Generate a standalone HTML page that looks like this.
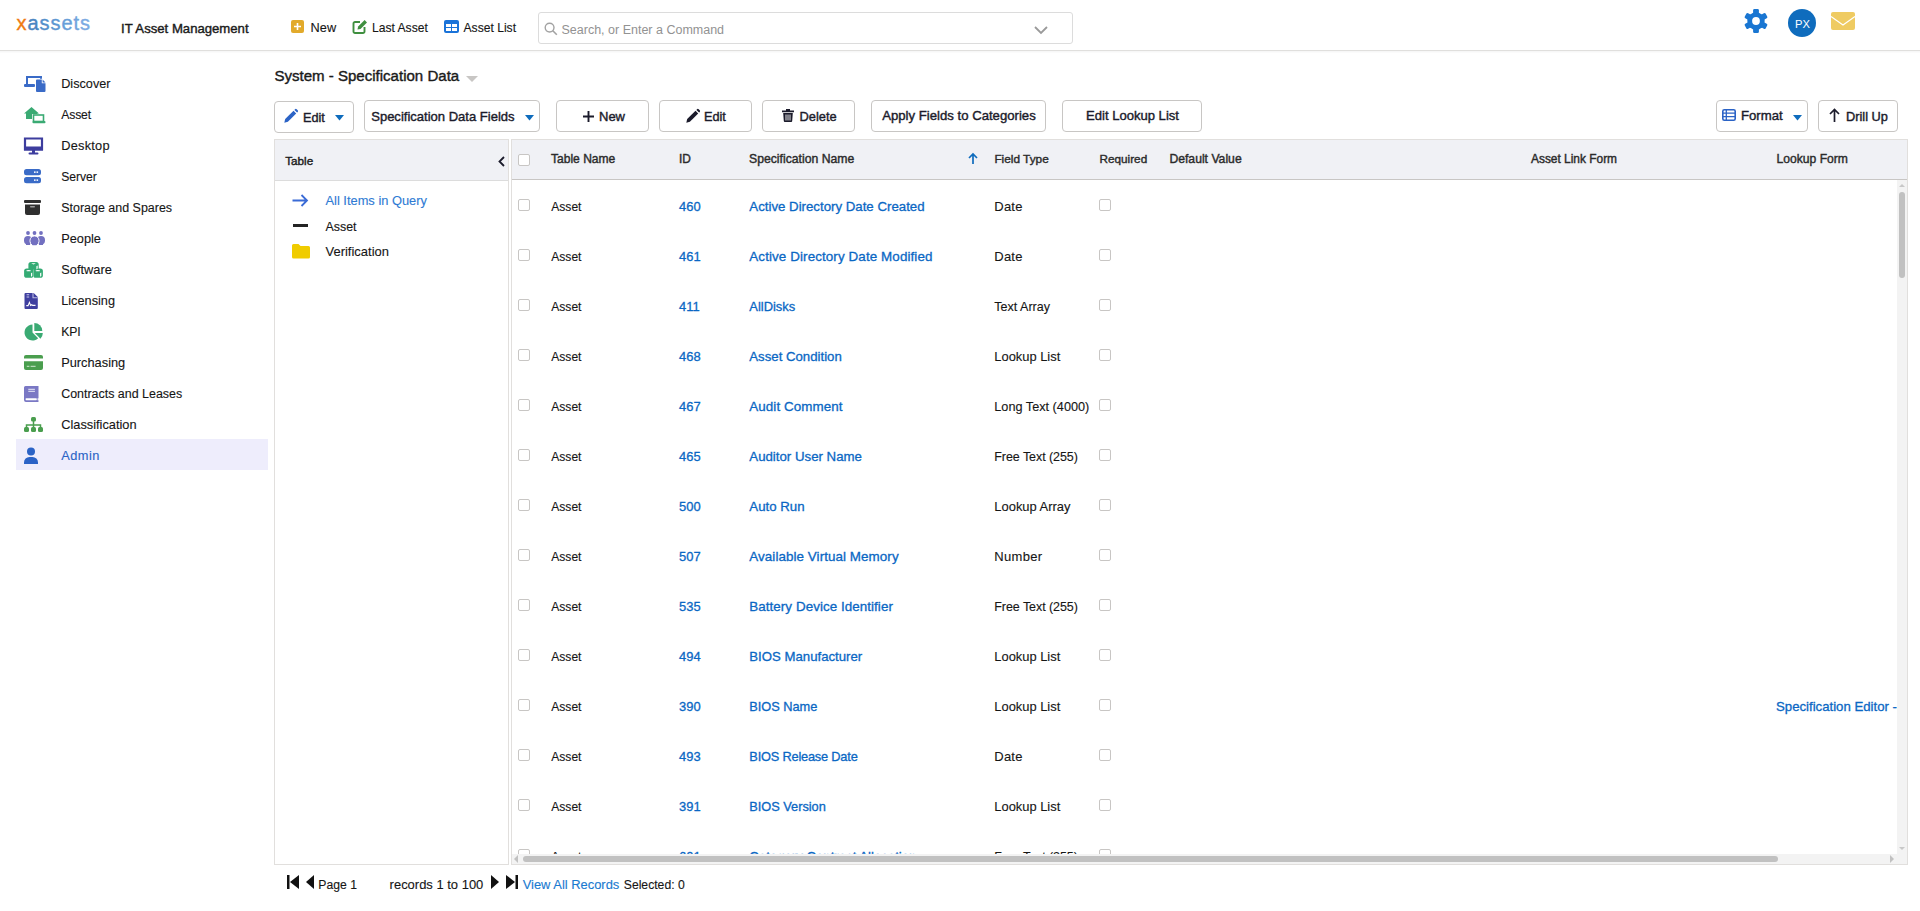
<!DOCTYPE html><html><head><meta charset="utf-8"><title>xassets</title><style>
*{box-sizing:border-box;margin:0;padding:0}
html,body{width:1920px;height:911px;overflow:hidden;background:#fff;font-family:"Liberation Sans",sans-serif;color:#242424}
.t{position:absolute;white-space:nowrap;line-height:20px;height:20px;-webkit-text-stroke:0.12px currentColor}
.abs{position:absolute}
.t.sb2{-webkit-text-stroke:0.3px currentColor}
.t.sb{-webkit-text-stroke:0.4px currentColor}
.btn{position:absolute;border:1px solid #c8c6c4;border-radius:4px;background:#fff}
svg{position:absolute;overflow:visible}
</style></head><body>
<div class="abs" style="left:0;top:0;width:1920px;height:51px;background:#fff;border-bottom:1px solid #e0dfdd"></div>
<div class="abs" style="left:0;top:51px;width:1920px;height:1px;background:#f7f7f7"></div>
<div class="abs" style="left:0;top:52px;width:1920px;height:1px;background:#fbfbfb"></div>
<div class="t" style="left:16.5px;top:13.27px;font-size:20px;letter-spacing:0.95px;-webkit-text-stroke:0"><span style="color:#f07a12;-webkit-text-stroke:0.4px #f07a12">x</span><span style="color:#4a86c2;-webkit-text-stroke:0.4px #4a86c2">a</span><span style="color:#5490cb;-webkit-text-stroke:0.4px #5490cb">s</span><span style="color:#5d97d2;-webkit-text-stroke:0.4px #5d97d2">s</span><span style="color:#689fd9;-webkit-text-stroke:0.4px #689fd9">e</span><span style="color:#72a4dd;-webkit-text-stroke:0.4px #72a4dd">t</span><span style="color:#7caae2;-webkit-text-stroke:0.4px #7caae2">s</span></div>
<div class="t sb" style="left:121px;top:18.94px;font-size:13.15px;color:#1b1b1b;">IT Asset Management</div>
<svg style="left:291px;top:20px" width="13" height="13" viewBox="0 0 13 13"><rect x="0" y="0" width="13" height="13" rx="2" fill="#e2aa2b"/><path d="M6.5 3v7M3 6.5h7" stroke="#fff" stroke-width="1.6"/></svg>
<div class="t " style="left:310.6px;top:17.98px;font-size:12.75px;color:#161616;">New</div>
<svg style="left:352px;top:19px" width="16" height="15" viewBox="0 0 16 15"><path d="M8 3H3a1.5 1.5 0 0 0-1.5 1.5v8A1.5 1.5 0 0 0 3 14h8a1.5 1.5 0 0 0 1.5-1.5V8" fill="none" stroke="#3f8f3f" stroke-width="1.9"/><path d="M5.5 10.5l0.6-3 6.5-6.5 2.4 2.4-6.5 6.5z" fill="#3f8f3f"/></svg>
<div class="t " style="left:371.9px;top:18.19px;font-size:12.14px;color:#161616;">Last Asset</div>
<svg style="left:444px;top:20px" width="15" height="13" viewBox="0 0 15 13"><rect x="0" y="0" width="15" height="13" rx="2" fill="#1a73d9"/><rect x="2" y="4" width="5" height="3" fill="#fff"/><rect x="8" y="4" width="5" height="3" fill="#fff"/><rect x="2" y="8" width="5" height="3" fill="#fff"/><rect x="8" y="8" width="5" height="3" fill="#fff"/></svg>
<div class="t " style="left:463.5px;top:18.20px;font-size:12.11px;color:#161616;">Asset List</div>
<div class="abs" style="left:538px;top:12px;width:535px;height:32px;border:1px solid #dcdcdc;border-radius:3px"></div>
<svg style="left:544px;top:22px" width="14" height="14" viewBox="0 0 14 14"><circle cx="5.6" cy="5.6" r="4.4" fill="none" stroke="#a2a2a2" stroke-width="1.4"/><path d="M8.8 8.8l4 4" stroke="#a2a2a2" stroke-width="1.6"/></svg>
<div class="t " style="left:561.5px;top:19.57px;font-size:12.5px;color:#929292;-webkit-text-stroke:0">Search, or Enter a Command</div>
<svg style="left:1034px;top:26px" width="14" height="8" viewBox="0 0 14 8"><path d="M1 1l6 6 6-6" fill="none" stroke="#9a9a9a" stroke-width="1.8"/></svg>
<svg style="left:1744.2px;top:8.8px" width="24" height="24" viewBox="-12 -12 24 24"><g fill="#1976d2"><circle r="8.7"/><rect x="-2.9" y="-12" width="5.8" height="24" rx="1.3"/><rect x="-2.9" y="-12" width="5.8" height="24" rx="1.3" transform="rotate(60)"/><rect x="-2.9" y="-12" width="5.8" height="24" rx="1.3" transform="rotate(120)"/></g><circle r="3.9" fill="#fff"/></svg>
<div class="abs" style="left:1788px;top:9px;width:28px;height:28px;border-radius:50%;background:#0f6cbd"></div>
<div class="t" style="left:1788.5px;top:13.6px;width:28px;text-align:center;font-size:11.2px;color:#fff;-webkit-text-stroke:0">PX</div>
<svg style="left:1831px;top:12px" width="24" height="18" viewBox="0 0 24 18"><rect x="0" y="0" width="24" height="18" rx="2" fill="#efcb62"/><path d="M0 4.5l12 8.5 12-8.5" fill="none" stroke="#fff" stroke-width="1.2"/></svg>
<div class="abs" style="left:16px;top:439px;width:252px;height:31px;background:#eeedfc"></div>
<svg style="left:23px;top:75px" width="23" height="18" viewBox="0 0 23 18"><path d="M4 10V2h14v3" fill="none" stroke="#3a6bc7" stroke-width="2"/><rect x="1" y="9" width="11" height="3" rx="1" fill="#3a6bc7"/><path d="M12.2 3.7h7.3l3.8 3.8V17.5H12.2z" fill="#fff"/><path d="M14 4.5h4.8v3.7h3.7V16a1 1 0 0 1-1 1H14a1 1 0 0 1-1-1V5.5a1 1 0 0 1 1-1z" fill="#3a6bc7"/><path d="M19.6 4.6l2.9 2.9h-2.9z" fill="#3a6bc7"/></svg>
<div class="t " style="left:61.2px;top:73.60px;font-size:12.69px;color:#161616;letter-spacing:0.000px">Discover</div>
<svg style="left:23px;top:106px" width="23" height="18" viewBox="0 0 23 18"><path d="M1 7.5L8.5 1 16 7.5h-1.5V13H3V7.5z" fill="#3aaa73"/><rect x="9" y="8" width="14" height="10" fill="#fff"/><rect x="10.5" y="9" width="10" height="6.5" fill="none" stroke="#3aaa73" stroke-width="1.6"/><rect x="9.5" y="15" width="13" height="2.2" rx="1" fill="#3aaa73"/></svg>
<div class="t " style="left:61.2px;top:104.77px;font-size:12.2px;color:#161616;letter-spacing:-0.140px">Asset</div>
<svg style="left:23px;top:137px" width="21" height="18" viewBox="0 0 21 18"><path d="M2 1.5h17v11H2z" fill="none" stroke="#3d3d9e" stroke-width="2.2"/><rect x="1" y="9.5" width="19" height="4" fill="#3d3d9e"/><rect x="9" y="13" width="3" height="3" fill="#3d3d9e"/><rect x="5.5" y="15.5" width="10" height="2" rx="1" fill="#3d3d9e"/></svg>
<div class="t " style="left:61.2px;top:135.56px;font-size:12.8px;color:#161616;letter-spacing:0.235px">Desktop</div>
<svg style="left:23px;top:168px" width="19" height="17" viewBox="0 0 19 17"><rect x="1" y="1" width="17" height="6.3" rx="2.5" fill="#3a6bc7"/><rect x="1" y="9" width="17" height="6.3" rx="2.5" fill="#3a6bc7"/><rect x="11" y="3.4" width="1.6" height="1.5" fill="#fff"/><rect x="13.5" y="3.4" width="1.6" height="1.5" fill="#fff"/><rect x="11" y="11.4" width="1.6" height="1.5" fill="#fff"/><rect x="13.5" y="11.4" width="1.6" height="1.5" fill="#fff"/></svg>
<div class="t " style="left:61.2px;top:166.77px;font-size:12.2px;color:#161616;letter-spacing:-0.041px">Server</div>
<svg style="left:23px;top:199px" width="19" height="17" viewBox="0 0 19 17"><rect x="1" y="1" width="17" height="3" rx="1" fill="#2f2f2f"/><path d="M2 5.5h15V14a2 2 0 0 1-2 2H4a2 2 0 0 1-2-2z" fill="#2f2f2f"/><rect x="7" y="7" width="5" height="1.5" rx=".7" fill="#9a9a9a"/></svg>
<div class="t " style="left:61.2px;top:197.68px;font-size:12.47px;color:#161616;letter-spacing:0.000px">Storage and Spares</div>
<svg style="left:23px;top:230px" width="23" height="17" viewBox="0 0 23 17"><circle cx="5" cy="3" r="1.9" fill="#7270c0"/><circle cx="11.5" cy="3" r="1.9" fill="#7270c0"/><circle cx="18" cy="3" r="1.9" fill="#7270c0"/><path d="M1 10a4 4 0 0 1 8 0v1a4 4 0 0 1-2 3.3v0.7H3v-0.7a4 4 0 0 1-2-3.3z" fill="#7270c0"/><path d="M14 10a4 4 0 0 1 8 0v1a4 4 0 0 1-2 3.3v0.7h-4v-0.7a4 4 0 0 1-2-3.3z" fill="#7270c0"/><path d="M7 10.4a4.5 4.5 0 0 1 9 0v1a4.5 4.5 0 0 1-2.3 3.8V15.8h-4.4v-0.6A4.5 4.5 0 0 1 7 11.4z" fill="#7270c0" stroke="#fff" stroke-width="1"/></svg>
<div class="t " style="left:61.2px;top:228.58px;font-size:12.77px;color:#161616;letter-spacing:0.000px">People</div>
<svg style="left:23px;top:261px" width="21" height="18" viewBox="0 0 21 18"><g fill="#34ab74"><rect x="5.4" y="1" width="10.3" height="8.5" rx="2.6"/><rect x="1.1" y="7.5" width="9.3" height="9.3" rx="2.6"/><rect x="10.2" y="7.5" width="9.7" height="9.3" rx="2.6"/></g><g fill="#fff"><path d="M8.2 2.2h4.6L10.5 3.6z"/><path d="M13.4 5.2l1.3-0.8v3.2l-1.3 0.8z"/><ellipse cx="5.6" cy="9.7" rx="2.3" ry="0.65"/><path d="M8 12.2l1.2-0.7v3.6L8 15.8z"/><ellipse cx="14.8" cy="9.7" rx="2.3" ry="0.65"/><path d="M17.1 12.2l1.2-0.7v3.6l-1.2 0.7z"/></g><path d="M10.3 8.2v8.6" stroke="#fff" stroke-width="0.4" opacity="0.6"/></svg>
<div class="t " style="left:61.2px;top:259.56px;font-size:12.8px;color:#161616;letter-spacing:0.035px">Software</div>
<svg style="left:23.6px;top:292px" width="15" height="18" viewBox="0 0 15 18"><path d="M1.5 1h8.2l4.1 4.1V16a1 1 0 0 1-1 1H1.5a1 1 0 0 1-1-1V2a1 1 0 0 1 1-1z" fill="#3f3f9f"/><path d="M9 1v4.8h4.8" fill="none" stroke="#b8b8e0" stroke-width="1.1"/><path d="M2.6 2.8h2.6M2.6 5h2.6" stroke="#c8c8ec" stroke-width="1.1"/><path d="M2.3 13.6h1.8l1.3-3.2 1.2 3 1.1-0.7 1 0.7h2.8" fill="none" stroke="#fff" stroke-width="1.1"/></svg>
<div class="t " style="left:61.2px;top:290.59px;font-size:12.74px;color:#161616;letter-spacing:-0.000px">Licensing</div>
<svg style="left:24px;top:323px" width="20" height="18" viewBox="0 0 20 18"><path d="M8.5 9.5V1.5A8 8 0 1 0 14.16 15.16z" fill="#3aaa73"/><path d="M10.3 8V0A8 8 0 0 1 18.3 8z" fill="#3aaa73"/><path d="M10.8 10h8A8 8 0 0 1 16.46 15.66z" fill="#3aaa73"/></svg>
<div class="t " style="left:61.2px;top:321.77px;font-size:12.2px;color:#161616;letter-spacing:-0.118px">KPI</div>
<svg style="left:23px;top:354px" width="21" height="17" viewBox="0 0 21 17"><path d="M3 1h15a2 2 0 0 1 2 2v1.5H1V3a2 2 0 0 1 2-2z" fill="#4a9e4e"/><path d="M1 7.3h19v6.7a2 2 0 0 1-2 2H3a2 2 0 0 1-2-2z" fill="#4a9e4e"/><path d="M3.8 12.3h2.6M7.6 12.3h5" stroke="#e0f0e0" stroke-width="0.9"/></svg>
<div class="t " style="left:61.2px;top:352.56px;font-size:12.8px;color:#161616;letter-spacing:0.000px">Purchasing</div>
<svg style="left:23px;top:385px" width="17" height="18" viewBox="0 0 17 18"><path d="M2.5 1h13v15.5a0.5 0.5 0 0 1-0.5 0.5H3a2 2 0 0 1-2-2V2.5A1.5 1.5 0 0 1 2.5 1z" fill="#7a78c4"/><rect x="2.6" y="13.2" width="11.2" height="2" rx="0.6" fill="#fff"/><path d="M14.6 13.2h1.2v2h-1.2z" fill="#fff"/><path d="M5.3 4.3h6.6M5.3 6.4h6.6" stroke="#d4d4ee" stroke-width="1.3"/></svg>
<div class="t " style="left:61.2px;top:383.69px;font-size:12.45px;color:#161616;letter-spacing:0.000px">Contracts and Leases</div>
<svg style="left:23px;top:416px" width="21" height="17" viewBox="0 0 21 17"><rect x="8" y="1" width="5" height="4.5" rx="1.5" fill="#4a9e4e"/><path d="M10.5 5v4M3.5 12V9h14v3M10.5 9v3" fill="none" stroke="#4a9e4e" stroke-width="1.5"/><rect x="1" y="11" width="5" height="5" rx="1.5" fill="#4a9e4e"/><rect x="8" y="11" width="5" height="5" rx="1.5" fill="#4a9e4e"/><rect x="15" y="11" width="5" height="5" rx="1.5" fill="#4a9e4e"/></svg>
<div class="t " style="left:61.2px;top:414.56px;font-size:12.8px;color:#161616;letter-spacing:0.002px">Classification</div>
<svg style="left:23px;top:447px" width="16" height="17" viewBox="0 0 16 17"><circle cx="8" cy="4.5" r="4" fill="#2b63c6"/><path d="M1 17v-1.5A5.5 5.5 0 0 1 6.5 10h3a5.5 5.5 0 0 1 5.5 5.5V17z" fill="#2b63c6"/></svg>
<div class="t " style="left:61.2px;top:445.56px;font-size:12.8px;color:#2b63c6;letter-spacing:0.479px">Admin</div>
<div class="t sb" style="left:274.4px;top:66.28px;font-size:15.06px;color:#1b1b1b;">System - Specification Data</div>
<svg style="left:466px;top:76px" width="12" height="6" viewBox="0 0 12 6"><path d="M0 0h12L6 6z" fill="#c8c6c4"/></svg>
<div class="btn" style="left:274px;top:101px;width:80px;height:32px"></div>
<svg style="left:284px;top:109px" width="14" height="14" viewBox="0 0 14 14"><path d="M0.3 13.7l0.9-3.6 8.3-8.3 2.7 2.7-8.3 8.3z" fill="#2b63c6"/><path d="M10.4 0.9l0.6-0.6a1.2 1.2 0 0 1 1.7 0l1 1a1.2 1.2 0 0 1 0 1.7l-0.6 0.6z" fill="#2b63c6"/></svg>
<div class="t sb" style="left:303px;top:107.80px;font-size:12.71px;color:#1b1b2b;">Edit</div>
<svg style="left:335px;top:115px" width="9" height="6" viewBox="0 0 9 6"><path d="M0 0h9L4.5 5.5z" fill="#0f6cbd"/></svg>
<div class="btn" style="left:364px;top:100px;width:176px;height:32px"></div>
<div class="t sb" style="left:371.2px;top:106.98px;font-size:13.04px;color:#1b1b2b;">Specification Data Fields</div>
<svg style="left:525px;top:115px" width="9" height="6" viewBox="0 0 9 6"><path d="M0 0h9L4.5 5.5z" fill="#0f6cbd"/></svg>
<div class="btn" style="left:556px;top:100px;width:93px;height:32px"></div>
<svg style="left:582.5px;top:110.5px" width="11" height="11" viewBox="0 0 11 11"><path d="M5.5 0v11M0 5.5h11" stroke="#1b1b2b" stroke-width="1.9"/></svg>
<div class="t sb" style="left:599px;top:106.50px;font-size:13.0px;color:#1b1b2b;">New</div>
<div class="btn" style="left:659px;top:100px;width:93px;height:32px"></div>
<svg style="left:686px;top:109px" width="14" height="14" viewBox="0 0 14 14"><path d="M0.3 13.7l0.9-3.6 8.3-8.3 2.7 2.7-8.3 8.3z" fill="#1b1b2b"/><path d="M10.4 0.9l0.6-0.6a1.2 1.2 0 0 1 1.7 0l1 1a1.2 1.2 0 0 1 0 1.7l-0.6 0.6z" fill="#1b1b2b"/></svg>
<div class="t sb" style="left:704px;top:106.60px;font-size:12.71px;color:#1b1b2b;">Edit</div>
<div class="btn" style="left:762px;top:100px;width:93px;height:32px"></div>
<svg style="left:782px;top:109px" width="12" height="13" viewBox="0 0 12 13"><path d="M0 1.5h12v1.8H0zM4 0h4v1.5H4z" fill="#1b1b2b"/><path d="M1.2 4h9.6l-0.6 8a1 1 0 0 1-1 1H2.8a1 1 0 0 1-1-1z" fill="#1b1b2b"/><path d="M4 5.5v6M6 5.5v6M8 5.5v6" stroke="#fff" stroke-width=".9"/></svg>
<div class="t sb" style="left:799.5px;top:106.54px;font-size:12.87px;color:#1b1b2b;">Delete</div>
<div class="btn" style="left:871px;top:100px;width:175px;height:32px"></div>
<div class="t sb" style="left:882.2px;top:106.44px;font-size:13.17px;color:#1b1b2b;">Apply Fields to Categories</div>
<div class="btn" style="left:1062px;top:100px;width:140px;height:32px"></div>
<div class="t sb" style="left:1086px;top:106.47px;font-size:13.07px;color:#1b1b2b;">Edit Lookup List</div>
<div class="btn" style="left:1716px;top:100px;width:92px;height:32px"></div>
<svg style="left:1722px;top:109px" width="14" height="12" viewBox="0 0 14 12"><rect x="0.8" y="0.8" width="12.4" height="10.4" rx="1.5" fill="none" stroke="#2b63c6" stroke-width="1.6"/><path d="M1 4.2h12M1 7.6h12M4.3 1v10" stroke="#2b63c6" stroke-width="1.3"/></svg>
<div class="t sb" style="left:1741px;top:106.44px;font-size:13.17px;color:#1b1b2b;">Format</div>
<svg style="left:1793px;top:115px" width="9" height="6" viewBox="0 0 9 6"><path d="M0 0h9L4.5 5.5z" fill="#0f6cbd"/></svg>
<div class="btn" style="left:1818px;top:100px;width:80px;height:32px"></div>
<svg style="left:1829px;top:108px" width="11" height="14" viewBox="0 0 11 14"><path d="M5.5 1.5V14M1 6l4.5-4.5L10 6" fill="none" stroke="#1b1b2b" stroke-width="1.7"/></svg>
<div class="t sb" style="left:1846px;top:106.56px;font-size:12.81px;color:#1b1b2b;">Drill Up</div>
<div class="abs" style="left:274px;top:139px;width:235px;height:726px;border:1px solid #e1dfdd;background:#fff"></div>
<div class="abs" style="left:275px;top:140px;width:233px;height:41px;background:#f0f1f5;border-bottom:1px solid #dcdcdc"></div>
<div class="t sb" style="left:285.2px;top:151.44px;font-size:11.71px;color:#1b1b1b;">Table</div>
<svg style="left:498px;top:156px" width="7" height="11" viewBox="0 0 7 11"><path d="M6 1L1.5 5.5 6 10" fill="none" stroke="#1b1b2b" stroke-width="1.8"/></svg>
<svg style="left:292px;top:194px" width="17" height="13" viewBox="0 0 17 13"><path d="M0.5 6.5h15M9.5 1l5.5 5.5-5.5 5.5" fill="none" stroke="#3a6bd6" stroke-width="1.8"/></svg>
<div class="t " style="left:325.5px;top:191.04px;font-size:12.86px;color:#2f7bd4;">All Items in Query</div>
<div class="abs" style="left:293px;top:224px;width:15px;height:3px;background:#242424"></div>
<div class="t " style="left:325.5px;top:216.90px;font-size:12.4px;color:#161616;">Asset</div>
<svg style="left:292px;top:243px" width="18" height="16" viewBox="0 0 18 16"><path d="M1.5 1h5l2 2h8a1.5 1.5 0 0 1 1.5 1.5V14a1.5 1.5 0 0 1-1.5 1.5h-15A1.5 1.5 0 0 1 0 14V2.5A1.5 1.5 0 0 1 1.5 1z" fill="#f0cc00"/></svg>
<div class="t " style="left:325.5px;top:242.20px;font-size:12.98px;color:#161616;">Verification</div>
<div class="abs" style="left:511px;top:139px;width:1397px;height:726px;border:1px solid #e1dfdd;background:#fff"></div>
<div class="abs" style="left:512px;top:140px;width:1395px;height:40px;background:#f0f1f5;border-bottom:1px solid #c8c6c4"></div>
<div class="abs" style="left:518px;top:154px;width:12px;height:12px;border:1px solid #c8c6c4;border-radius:2px;background:#fff"></div>
<div class="t sb" style="left:551px;top:149.12px;font-size:12.05px;color:#2b2b2b;">Table Name</div>
<div class="t sb" style="left:679px;top:149.18px;font-size:11.9px;color:#2b2b2b;">ID</div>
<div class="t sb" style="left:749px;top:149.07px;font-size:12.22px;color:#2b2b2b;">Specification Name</div>
<div class="t sb" style="left:994.4px;top:149.20px;font-size:11.84px;color:#2b2b2b;">Field Type</div>
<div class="t sb" style="left:1099.5px;top:149.23px;font-size:11.75px;color:#2b2b2b;">Required</div>
<div class="t sb" style="left:1169.4px;top:149.08px;font-size:12.19px;color:#2b2b2b;">Default Value</div>
<div class="t sb" style="left:1531px;top:149.17px;font-size:11.92px;color:#2b2b2b;">Asset Link Form</div>
<div class="t sb" style="left:1776.5px;top:149.09px;font-size:12.14px;color:#2b2b2b;">Lookup Form</div>
<svg style="left:968px;top:153px" width="10" height="11" viewBox="0 0 10 11"><path d="M5 1.2V11M1 5l4-4 4 4" fill="none" stroke="#0f6cbd" stroke-width="1.7"/></svg>
<div class="abs" style="left:512px;top:181px;width:1385px;height:673px;overflow:hidden">
<div class="abs" style="left:6px;top:18px;width:12px;height:12px;border:1px solid #c8c6c4;border-radius:2px;background:#fff"></div>
<div class="t " style="left:39.299999999999955px;top:16.32px;font-size:12.07px;color:#161616;">Asset</div>
<div class="t sb2" style="left:167px;top:16.01px;font-size:12.95px;color:#0a67c4;">460</div>
<div class="t sb2" style="left:237.29999999999995px;top:15.91px;font-size:13.25px;color:#0a67c4;letter-spacing:0.000px">Active Directory Date Created</div>
<div class="t " style="left:482.29999999999995px;top:16.00px;font-size:13.0px;color:#161616;letter-spacing:0.210px">Date</div>
<div class="abs" style="left:587px;top:18px;width:12px;height:12px;border:1px solid #c8c6c4;border-radius:2px;background:#fff"></div>
<div class="abs" style="left:6px;top:68px;width:12px;height:12px;border:1px solid #c8c6c4;border-radius:2px;background:#fff"></div>
<div class="t " style="left:39.299999999999955px;top:66.32px;font-size:12.07px;color:#161616;">Asset</div>
<div class="t sb2" style="left:167px;top:66.01px;font-size:12.95px;color:#0a67c4;">461</div>
<div class="t sb2" style="left:237.29999999999995px;top:65.86px;font-size:13.4px;color:#0a67c4;letter-spacing:0.105px">Active Directory Date Modified</div>
<div class="t " style="left:482.29999999999995px;top:66.00px;font-size:13.0px;color:#161616;letter-spacing:0.210px">Date</div>
<div class="abs" style="left:587px;top:68px;width:12px;height:12px;border:1px solid #c8c6c4;border-radius:2px;background:#fff"></div>
<div class="abs" style="left:6px;top:118px;width:12px;height:12px;border:1px solid #c8c6c4;border-radius:2px;background:#fff"></div>
<div class="t " style="left:39.299999999999955px;top:116.32px;font-size:12.07px;color:#161616;">Asset</div>
<div class="t sb2" style="left:167px;top:116.01px;font-size:12.95px;color:#0a67c4;">411</div>
<div class="t sb2" style="left:237.29999999999995px;top:116.03px;font-size:12.91px;color:#0a67c4;letter-spacing:0.000px">AllDisks</div>
<div class="t " style="left:482.29999999999995px;top:116.16px;font-size:12.52px;color:#161616;letter-spacing:-0.000px">Text Array</div>
<div class="abs" style="left:587px;top:118px;width:12px;height:12px;border:1px solid #c8c6c4;border-radius:2px;background:#fff"></div>
<div class="abs" style="left:6px;top:168px;width:12px;height:12px;border:1px solid #c8c6c4;border-radius:2px;background:#fff"></div>
<div class="t " style="left:39.299999999999955px;top:166.32px;font-size:12.07px;color:#161616;">Asset</div>
<div class="t sb2" style="left:167px;top:166.01px;font-size:12.95px;color:#0a67c4;">468</div>
<div class="t sb2" style="left:237.29999999999995px;top:165.92px;font-size:13.21px;color:#0a67c4;letter-spacing:0.000px">Asset Condition</div>
<div class="t " style="left:482.29999999999995px;top:166.03px;font-size:12.9px;color:#161616;letter-spacing:0.000px">Lookup List</div>
<div class="abs" style="left:587px;top:168px;width:12px;height:12px;border:1px solid #c8c6c4;border-radius:2px;background:#fff"></div>
<div class="abs" style="left:6px;top:218px;width:12px;height:12px;border:1px solid #c8c6c4;border-radius:2px;background:#fff"></div>
<div class="t " style="left:39.299999999999955px;top:216.32px;font-size:12.07px;color:#161616;">Asset</div>
<div class="t sb2" style="left:167px;top:216.01px;font-size:12.95px;color:#0a67c4;">467</div>
<div class="t sb2" style="left:237.29999999999995px;top:215.86px;font-size:13.4px;color:#0a67c4;letter-spacing:0.077px">Audit Comment</div>
<div class="t " style="left:482.29999999999995px;top:216.10px;font-size:12.69px;color:#161616;letter-spacing:0.000px">Long Text (4000)</div>
<div class="abs" style="left:587px;top:218px;width:12px;height:12px;border:1px solid #c8c6c4;border-radius:2px;background:#fff"></div>
<div class="abs" style="left:6px;top:268px;width:12px;height:12px;border:1px solid #c8c6c4;border-radius:2px;background:#fff"></div>
<div class="t " style="left:39.299999999999955px;top:266.32px;font-size:12.07px;color:#161616;">Asset</div>
<div class="t sb2" style="left:167px;top:266.01px;font-size:12.95px;color:#0a67c4;">465</div>
<div class="t sb2" style="left:237.29999999999995px;top:265.91px;font-size:13.26px;color:#0a67c4;letter-spacing:0.000px">Auditor User Name</div>
<div class="t " style="left:482.29999999999995px;top:266.17px;font-size:12.5px;color:#161616;letter-spacing:-0.065px">Free Text (255)</div>
<div class="abs" style="left:587px;top:268px;width:12px;height:12px;border:1px solid #c8c6c4;border-radius:2px;background:#fff"></div>
<div class="abs" style="left:6px;top:318px;width:12px;height:12px;border:1px solid #c8c6c4;border-radius:2px;background:#fff"></div>
<div class="t " style="left:39.299999999999955px;top:316.32px;font-size:12.07px;color:#161616;">Asset</div>
<div class="t sb2" style="left:167px;top:316.01px;font-size:12.95px;color:#0a67c4;">500</div>
<div class="t sb2" style="left:237.29999999999995px;top:315.91px;font-size:13.25px;color:#0a67c4;letter-spacing:0.000px">Auto Run</div>
<div class="t " style="left:482.29999999999995px;top:316.01px;font-size:12.95px;color:#161616;letter-spacing:0.000px">Lookup Array</div>
<div class="abs" style="left:587px;top:318px;width:12px;height:12px;border:1px solid #c8c6c4;border-radius:2px;background:#fff"></div>
<div class="abs" style="left:6px;top:368px;width:12px;height:12px;border:1px solid #c8c6c4;border-radius:2px;background:#fff"></div>
<div class="t " style="left:39.299999999999955px;top:366.32px;font-size:12.07px;color:#161616;">Asset</div>
<div class="t sb2" style="left:167px;top:366.01px;font-size:12.95px;color:#0a67c4;">507</div>
<div class="t sb2" style="left:237.29999999999995px;top:365.86px;font-size:13.4px;color:#0a67c4;letter-spacing:0.073px">Available Virtual Memory</div>
<div class="t " style="left:482.29999999999995px;top:366.00px;font-size:13.0px;color:#161616;letter-spacing:0.311px">Number</div>
<div class="abs" style="left:587px;top:368px;width:12px;height:12px;border:1px solid #c8c6c4;border-radius:2px;background:#fff"></div>
<div class="abs" style="left:6px;top:418px;width:12px;height:12px;border:1px solid #c8c6c4;border-radius:2px;background:#fff"></div>
<div class="t " style="left:39.299999999999955px;top:416.32px;font-size:12.07px;color:#161616;">Asset</div>
<div class="t sb2" style="left:167px;top:416.01px;font-size:12.95px;color:#0a67c4;">535</div>
<div class="t sb2" style="left:237.29999999999995px;top:415.86px;font-size:13.4px;color:#0a67c4;letter-spacing:0.058px">Battery Device Identifier</div>
<div class="t " style="left:482.29999999999995px;top:416.17px;font-size:12.5px;color:#161616;letter-spacing:-0.065px">Free Text (255)</div>
<div class="abs" style="left:587px;top:418px;width:12px;height:12px;border:1px solid #c8c6c4;border-radius:2px;background:#fff"></div>
<div class="abs" style="left:6px;top:468px;width:12px;height:12px;border:1px solid #c8c6c4;border-radius:2px;background:#fff"></div>
<div class="t " style="left:39.299999999999955px;top:466.32px;font-size:12.07px;color:#161616;">Asset</div>
<div class="t sb2" style="left:167px;top:466.01px;font-size:12.95px;color:#0a67c4;">494</div>
<div class="t sb2" style="left:237.29999999999995px;top:465.93px;font-size:13.19px;color:#0a67c4;letter-spacing:0.000px">BIOS Manufacturer</div>
<div class="t " style="left:482.29999999999995px;top:466.03px;font-size:12.9px;color:#161616;letter-spacing:0.000px">Lookup List</div>
<div class="abs" style="left:587px;top:468px;width:12px;height:12px;border:1px solid #c8c6c4;border-radius:2px;background:#fff"></div>
<div class="abs" style="left:6px;top:518px;width:12px;height:12px;border:1px solid #c8c6c4;border-radius:2px;background:#fff"></div>
<div class="t " style="left:39.299999999999955px;top:516.32px;font-size:12.07px;color:#161616;">Asset</div>
<div class="t sb2" style="left:167px;top:516.01px;font-size:12.95px;color:#0a67c4;">390</div>
<div class="t sb2" style="left:237.29999999999995px;top:516.06px;font-size:12.8px;color:#0a67c4;letter-spacing:-0.038px">BIOS Name</div>
<div class="t " style="left:482.29999999999995px;top:516.03px;font-size:12.9px;color:#161616;letter-spacing:0.000px">Lookup List</div>
<div class="abs" style="left:587px;top:518px;width:12px;height:12px;border:1px solid #c8c6c4;border-radius:2px;background:#fff"></div>
<div class="t sb2" style="left:1264px;top:515.93px;font-size:13.2px;color:#0a67c4;">Specification Editor - BIOS</div>
<div class="abs" style="left:6px;top:568px;width:12px;height:12px;border:1px solid #c8c6c4;border-radius:2px;background:#fff"></div>
<div class="t " style="left:39.299999999999955px;top:566.32px;font-size:12.07px;color:#161616;">Asset</div>
<div class="t sb2" style="left:167px;top:566.01px;font-size:12.95px;color:#0a67c4;">493</div>
<div class="t sb2" style="left:237.29999999999995px;top:566.06px;font-size:12.8px;color:#0a67c4;letter-spacing:-0.201px">BIOS Release Date</div>
<div class="t " style="left:482.29999999999995px;top:566.00px;font-size:13.0px;color:#161616;letter-spacing:0.210px">Date</div>
<div class="abs" style="left:587px;top:568px;width:12px;height:12px;border:1px solid #c8c6c4;border-radius:2px;background:#fff"></div>
<div class="abs" style="left:6px;top:618px;width:12px;height:12px;border:1px solid #c8c6c4;border-radius:2px;background:#fff"></div>
<div class="t " style="left:39.299999999999955px;top:616.32px;font-size:12.07px;color:#161616;">Asset</div>
<div class="t sb2" style="left:167px;top:616.01px;font-size:12.95px;color:#0a67c4;">391</div>
<div class="t sb2" style="left:237.29999999999995px;top:616.06px;font-size:12.8px;color:#0a67c4;letter-spacing:-0.027px">BIOS Version</div>
<div class="t " style="left:482.29999999999995px;top:616.03px;font-size:12.9px;color:#161616;letter-spacing:0.000px">Lookup List</div>
<div class="abs" style="left:587px;top:618px;width:12px;height:12px;border:1px solid #c8c6c4;border-radius:2px;background:#fff"></div>
<div class="abs" style="left:6px;top:668px;width:12px;height:12px;border:1px solid #c8c6c4;border-radius:2px;background:#fff"></div>
<div class="t " style="left:39.299999999999955px;top:666.32px;font-size:12.07px;color:#161616;">Asset</div>
<div class="t sb2" style="left:167px;top:666.01px;font-size:12.95px;color:#0a67c4;">601</div>
<div class="t sb2" style="left:237.29999999999995px;top:665.93px;font-size:13.2px;color:#0a67c4;letter-spacing:0.000px">Category Contract Allocation</div>
<div class="t " style="left:482.29999999999995px;top:666.17px;font-size:12.5px;color:#161616;letter-spacing:-0.065px">Free Text (255)</div>
<div class="abs" style="left:587px;top:668px;width:12px;height:12px;border:1px solid #c8c6c4;border-radius:2px;background:#fff"></div>
</div>
<div class="abs" style="left:1897px;top:180px;width:10px;height:674px;background:#f3f3f3"></div>
<svg style="left:1899px;top:184px" width="6" height="3" viewBox="0 0 6 3"><path d="M0 3L3 0l3 3z" fill="#c8c8c8"/></svg>
<div class="abs" style="left:1899px;top:192px;width:6px;height:86px;border-radius:3px;background:#c1c1c1"></div>
<svg style="left:1899px;top:847px" width="6" height="3" viewBox="0 0 6 3"><path d="M0 0h6L3 3z" fill="#c8c8c8"/></svg>
<div class="abs" style="left:512px;top:854px;width:1395px;height:10px;background:#f3f3f3"></div>
<svg style="left:514px;top:855px" width="4" height="8" viewBox="0 0 4 8"><path d="M4 0v8L0 4z" fill="#c1c1c1"/></svg>
<div class="abs" style="left:523px;top:856px;width:1255px;height:6px;border-radius:3px;background:#c1c1c1"></div>
<svg style="left:1890px;top:855px" width="4" height="8" viewBox="0 0 4 8"><path d="M0 0v8l4-4z" fill="#c1c1c1"/></svg>
<svg style="left:287px;top:875px" width="13" height="14" viewBox="0 0 13 14"><path d="M0 0h2.5v14H0z" fill="#111"/><path d="M12 0v14L3 7z" fill="#111"/></svg>
<svg style="left:306px;top:875px" width="8" height="14" viewBox="0 0 8 14"><path d="M8 0v14L0 7z" fill="#111"/></svg>
<div class="t " style="left:318.3px;top:874.77px;font-size:12.21px;color:#161616;">Page 1</div>
<div class="t " style="left:389.6px;top:874.51px;font-size:12.97px;color:#161616;">records 1 to 100</div>
<svg style="left:491px;top:875px" width="8" height="14" viewBox="0 0 8 14"><path d="M0 0v14l8-7z" fill="#111"/></svg>
<svg style="left:506px;top:875px" width="12" height="14" viewBox="0 0 12 14"><path d="M0 0v14l9-7z" fill="#111"/><path d="M9.5 0H12v14H9.5z" fill="#111"/></svg>
<div class="t " style="left:522.7px;top:874.53px;font-size:12.91px;color:#1a7ad0;">View All Records</div>
<div class="t " style="left:623.75px;top:874.78px;font-size:12.19px;color:#161616;">Selected: 0</div>
</body></html>
